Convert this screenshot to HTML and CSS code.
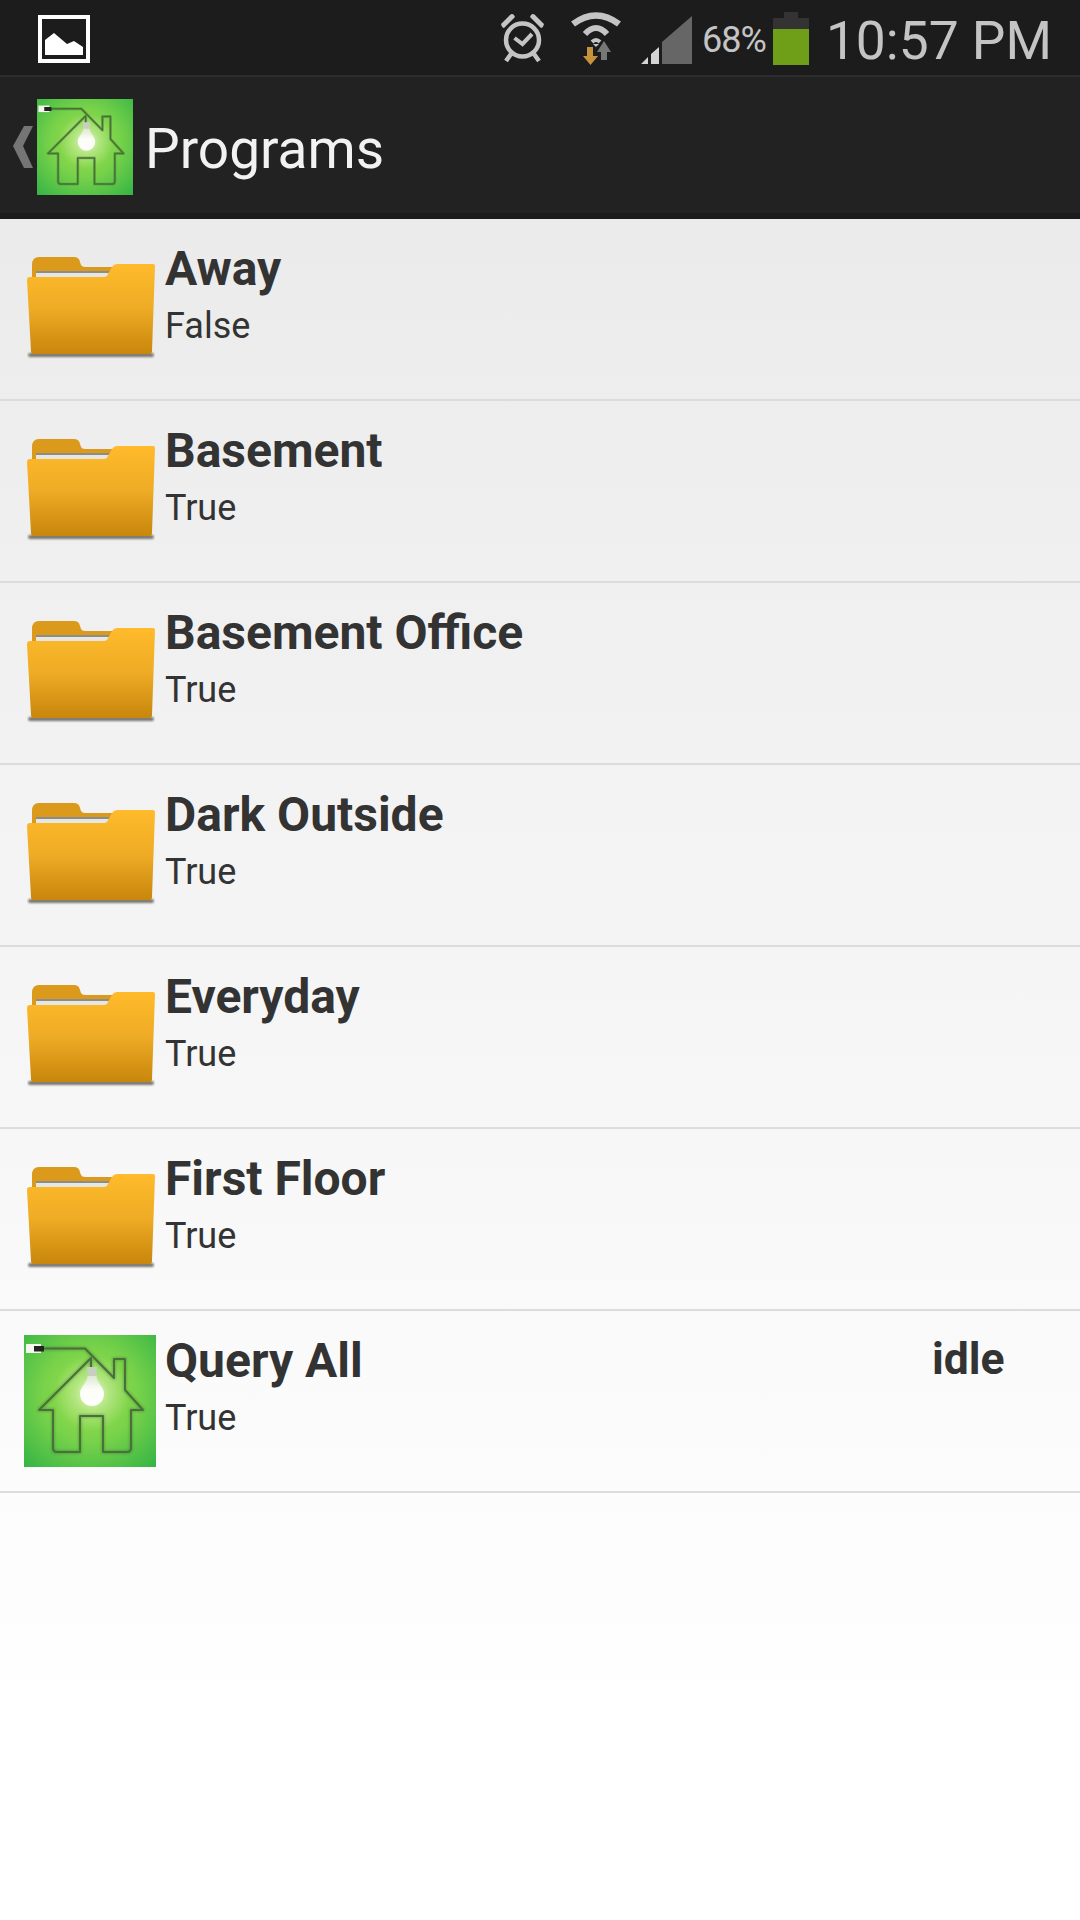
FILE: index.html
```html
<!DOCTYPE html>
<html lang="en">
<head>
    <meta charset="UTF-8">
    <meta name="viewport" content="width=device-width, initial-scale=1.0">
    <title>Programs</title>
    <link rel="stylesheet" href="styles.css">
</head>
<body>
    <svg class="defs" width="0" height="0">
        <defs>
            <radialGradient id="house-bg" cx="50%" cy="45%" r="72%">
                <stop offset="0" stop-color="#a0e04a"/>
                <stop offset="0.5" stop-color="#78d24a"/>
                <stop offset="1" stop-color="#38b545"/>
            </radialGradient>
            <radialGradient id="bulb-glow" cx="50%" cy="50%" r="50%">
                <stop offset="0" stop-color="#fff" stop-opacity="0.75"/>
                <stop offset="0.45" stop-color="#fff" stop-opacity="0.3"/>
                <stop offset="1" stop-color="#fff" stop-opacity="0"/>
            </radialGradient>
            <linearGradient id="bulb-glass" x1="0" y1="0" x2="0" y2="1">
                <stop offset="0" stop-color="#dfe8d4"/>
                <stop offset="0.45" stop-color="#fbfdf6"/>
                <stop offset="1" stop-color="#ffffff"/>
            </linearGradient>
            <linearGradient id="folder-front" x1="0" y1="0" x2="0" y2="1">
                <stop offset="0" stop-color="#ffbb2b"/>
                <stop offset="0.5" stop-color="#eeab25"/>
                <stop offset="1" stop-color="#c8860c"/>
            </linearGradient>
            <filter id="soft" x="-10%" y="-100%" width="120%" height="300%">
                <feGaussianBlur stdDeviation="1"/>
            </filter>
            <filter id="wire-blur" x="-5%" y="-5%" width="110%" height="110%">
                <feGaussianBlur stdDeviation="0.9"/>
            </filter>
            <symbol id="house" viewBox="0 0 132 132">
                <rect width="132" height="132" fill="url(#house-bg)"/>
                <circle cx="68" cy="58" r="38" fill="url(#bulb-glow)"/>
                <path d="M20 13.500H61L90 43V24H101V55L119 75H107V113Q107 117 103 117H79V81H56V117H33Q29 117 29 113V75H15L67 23V34" fill="none" stroke="#2f5a28" stroke-opacity="0.3" stroke-width="4" stroke-linejoin="round" filter="url(#wire-blur)"/>
                <path d="M20 13.500H61L90 43V24H101V55L119 75H107V113Q107 117 103 117H79V81H56V117H33Q29 117 29 113V75H15L67 23V34" fill="none" stroke="#4a6f3a" stroke-width="2" stroke-linejoin="round"/>
                <rect x="2" y="9" width="15" height="9" fill="#f4f8ee"/>
                <rect x="10" y="11" width="10" height="5.500" fill="#222"/>
                <path d="M63 32H73L72.500 41H63.500Z" fill="#c6d0bc"/>
                <path d="M63.500 41H72.500C73 49 80 51 80 59A12 12 0 0 1 56 59C56 51 63 49 63.500 41Z" fill="url(#bulb-glass)"/>
            </symbol>
            <symbol id="folder" viewBox="0 0 128 102">
                <rect x="1" y="96" width="126" height="4" rx="2" fill="#77756c" filter="url(#soft)"/>
                <path d="M5 22V8Q5 0 12 0H47Q52 0 53 5L54 8Q55 10 58 10H92V22Z" fill="#dc9a1c"/>
                <rect x="9" y="14" width="74" height="8" fill="#e6e6e2"/>
                <rect x="9" y="14" width="74" height="2" fill="#8d8d88"/>
                <path d="M0 23Q0 20 3 20H77Q80 20 81 17L85 10Q87 7 90 7H126Q128 7 128 9L125 94Q125 97 122 97H7Q4 97 4 94Z" fill="url(#folder-front)"/>
            </symbol>
        </defs>
    </svg>

    <div class="status-bar">
        <svg class="status-picture" width="52" height="48" viewBox="0 0 52 48">
            <rect x="2" y="2" width="48" height="44" fill="none" stroke="#fff" stroke-width="4"/>
            <path d="M7 40V25L16 18L29 29L36 26L45 32V40Z" fill="#fff"/>
        </svg>
        <div class="status-right">
            <svg class="status-alarm" width="45" height="50" viewBox="0 0 45 50">
                <path d="M1 11L10 2Q12 0 14 2L15 4L4 15Q2 15 1 11ZM44 11L35 2Q33 0 31 2L30 4L41 15Q43 15 44 11Z" fill="#c4c4c4"/>
                <circle cx="22.500" cy="27" r="16.500" fill="none" stroke="#c4c4c4" stroke-width="4.500"/>
                <path d="M14.500 25L22.500 31L32 21" fill="none" stroke="#c4c4c4" stroke-width="4"/>
                <path d="M11 41L6 48M34 41L39 48" stroke="#c4c4c4" stroke-width="4.500"/>
            </svg>
            <svg class="status-wifi" width="52" height="53" viewBox="0 0 52 53">
                <path d="M3 12Q26 -5 49 12" fill="none" stroke="#c4c4c4" stroke-width="6.500"/>
                <path d="M15 22Q26 10 37 22" fill="none" stroke="#c4c4c4" stroke-width="6"/>
                <path d="M22 30Q26 26 30 30" fill="none" stroke="#c4c4c4" stroke-width="4"/>
                <path d="M23 32H29L26 35Z" fill="#c4c4c4"/>
                <path d="M17 35H23V44H28L20.500 53L13 44H17Z" fill="#c8923a"/>
                <path d="M31 48V40H27L34 29L41 40H37V48Z" fill="#777"/>
            </svg>
            <svg class="status-signal" width="51" height="48" viewBox="0 0 51 48">
                <path d="M0 48L7 41V48ZM10 48V38L18 31V48Z" fill="#d4d4d4"/>
                <path d="M21 48V26L51 0V48Z" fill="#666"/>
            </svg>
            <span class="status-percent">68%</span>
            <div class="battery">
                <div class="battery-cap"></div>
                <div class="battery-shell"></div>
                <div class="battery-level"></div>
            </div>
            <span class="status-time">10:57 PM</span>
        </div>
    </div>

    <div class="action-bar">
        <svg class="back-arrow" width="22" height="44" viewBox="0 0 22 44">
            <path d="M21 1H12L1 21L12 43H21L11 21Z" fill="#757575"/>
        </svg>
        <svg class="app-icon"><use href="#house"/></svg>
        <span class="action-title">Programs</span>
    </div>

    <div class="program-list">
        <div class="program-row">
            <svg class="folder-icon"><use href="#folder"/></svg>
            <div class="program-text">
                <div class="program-name">Away</div>
                <div class="program-value">False</div>
            </div>
        </div>
        <div class="program-row">
            <svg class="folder-icon"><use href="#folder"/></svg>
            <div class="program-text">
                <div class="program-name">Basement</div>
                <div class="program-value">True</div>
            </div>
        </div>
        <div class="program-row">
            <svg class="folder-icon"><use href="#folder"/></svg>
            <div class="program-text">
                <div class="program-name">Basement Office</div>
                <div class="program-value">True</div>
            </div>
        </div>
        <div class="program-row">
            <svg class="folder-icon"><use href="#folder"/></svg>
            <div class="program-text">
                <div class="program-name">Dark Outside</div>
                <div class="program-value">True</div>
            </div>
        </div>
        <div class="program-row">
            <svg class="folder-icon"><use href="#folder"/></svg>
            <div class="program-text">
                <div class="program-name">Everyday</div>
                <div class="program-value">True</div>
            </div>
        </div>
        <div class="program-row">
            <svg class="folder-icon"><use href="#folder"/></svg>
            <div class="program-text">
                <div class="program-name">First Floor</div>
                <div class="program-value">True</div>
            </div>
        </div>
        <div class="program-row">
            <svg class="house-icon"><use href="#house"/></svg>
            <div class="program-text">
                <div class="program-name">Query All</div>
                <div class="program-value">True</div>
            </div>
            <div class="program-state">idle</div>
        </div>
    </div>
</body>
</html>
```

FILE: styles.css
```css
body {
    font-family: Roboto, sans-serif;
    margin: 0;
    width: 1080px;
    height: 1920px;
    overflow: hidden;
    background: linear-gradient(#ebebeb 219px, #ffffff 1730px);
}
.defs {
    display: block;
    height: 0;
}
.status-bar {
    height: 75px;
    background-color: #1c1c1c;
    border-bottom: 2px solid #2c2c2c;
    display: flex;
    align-items: center;
    justify-content: space-between;
    padding-left: 38px;
    padding-right: 28px;
}
.status-picture {
    display: block;
    margin-top: 3px;
}
.status-right {
    display: flex;
    align-items: center;
    color: #c4c4c4;
}
.status-alarm {
    display: block;
    margin-top: 1px;
}
.status-wifi {
    display: block;
    margin-left: 25px;
    margin-top: 2px;
}
.status-signal {
    display: block;
    margin-left: 19px;
    margin-top: 5px;
}
.status-percent {
    font-size: 36px;
    margin-left: 10px;
    letter-spacing: -1px;
    margin-top: 4px;
}
.battery {
    position: relative;
    width: 36px;
    height: 53px;
    margin-left: 7px;
    margin-top: 2px;
}
.battery-cap {
    width: 14px;
    height: 6px;
    margin: 0 auto;
    background-color: #333;
}
.battery-shell {
    height: 47px;
    background-color: #333;
}
.battery-level {
    position: absolute;
    left: 0;
    right: 0;
    bottom: 0;
    height: 36px;
    background-color: #6f9e18;
}
.status-time {
    font-size: 53.300px;
    margin-left: 17px;
    margin-top: 7px;
}
.action-bar {
    height: 132px;
    padding-top: 4px;
    background-color: #222222;
    border-bottom: 6px solid #1c1c1c;
    display: flex;
    align-items: center;
    padding-left: 12px;
}
.back-arrow {
    display: block;
}
.app-icon {
    display: block;
    width: 96px;
    height: 96px;
    margin-left: 3px;
}
.action-title {
    font-size: 55px;
    color: #f2f2f2;
    margin-left: 12px;
    margin-top: 3px;
}
.program-row {
    position: relative;
    height: 180px;
    border-bottom: 2px solid #dcdcdc;
    display: flex;
    align-items: flex-start;
    padding-left: 24px;
    color: #333333;
}
.folder-icon {
    display: block;
    width: 128px;
    height: 102px;
    margin-top: 38px;
    margin-left: 3px;
    margin-right: 10px;
}
.house-icon {
    display: block;
    width: 132px;
    height: 132px;
    margin-top: 24px;
    margin-right: 9px;
}
.program-text {
    padding-top: 22px;
}
.program-name {
    font-size: 48px;
    font-weight: bold;
    line-height: 56px;
}
.program-value {
    font-size: 36px;
    line-height: 42px;
    margin-top: 8px;
}
.program-state {
    position: absolute;
    left: 932px;
    top: 20px;
    font-size: 44.500px;
    font-weight: bold;
    line-height: 56px;
}
```
